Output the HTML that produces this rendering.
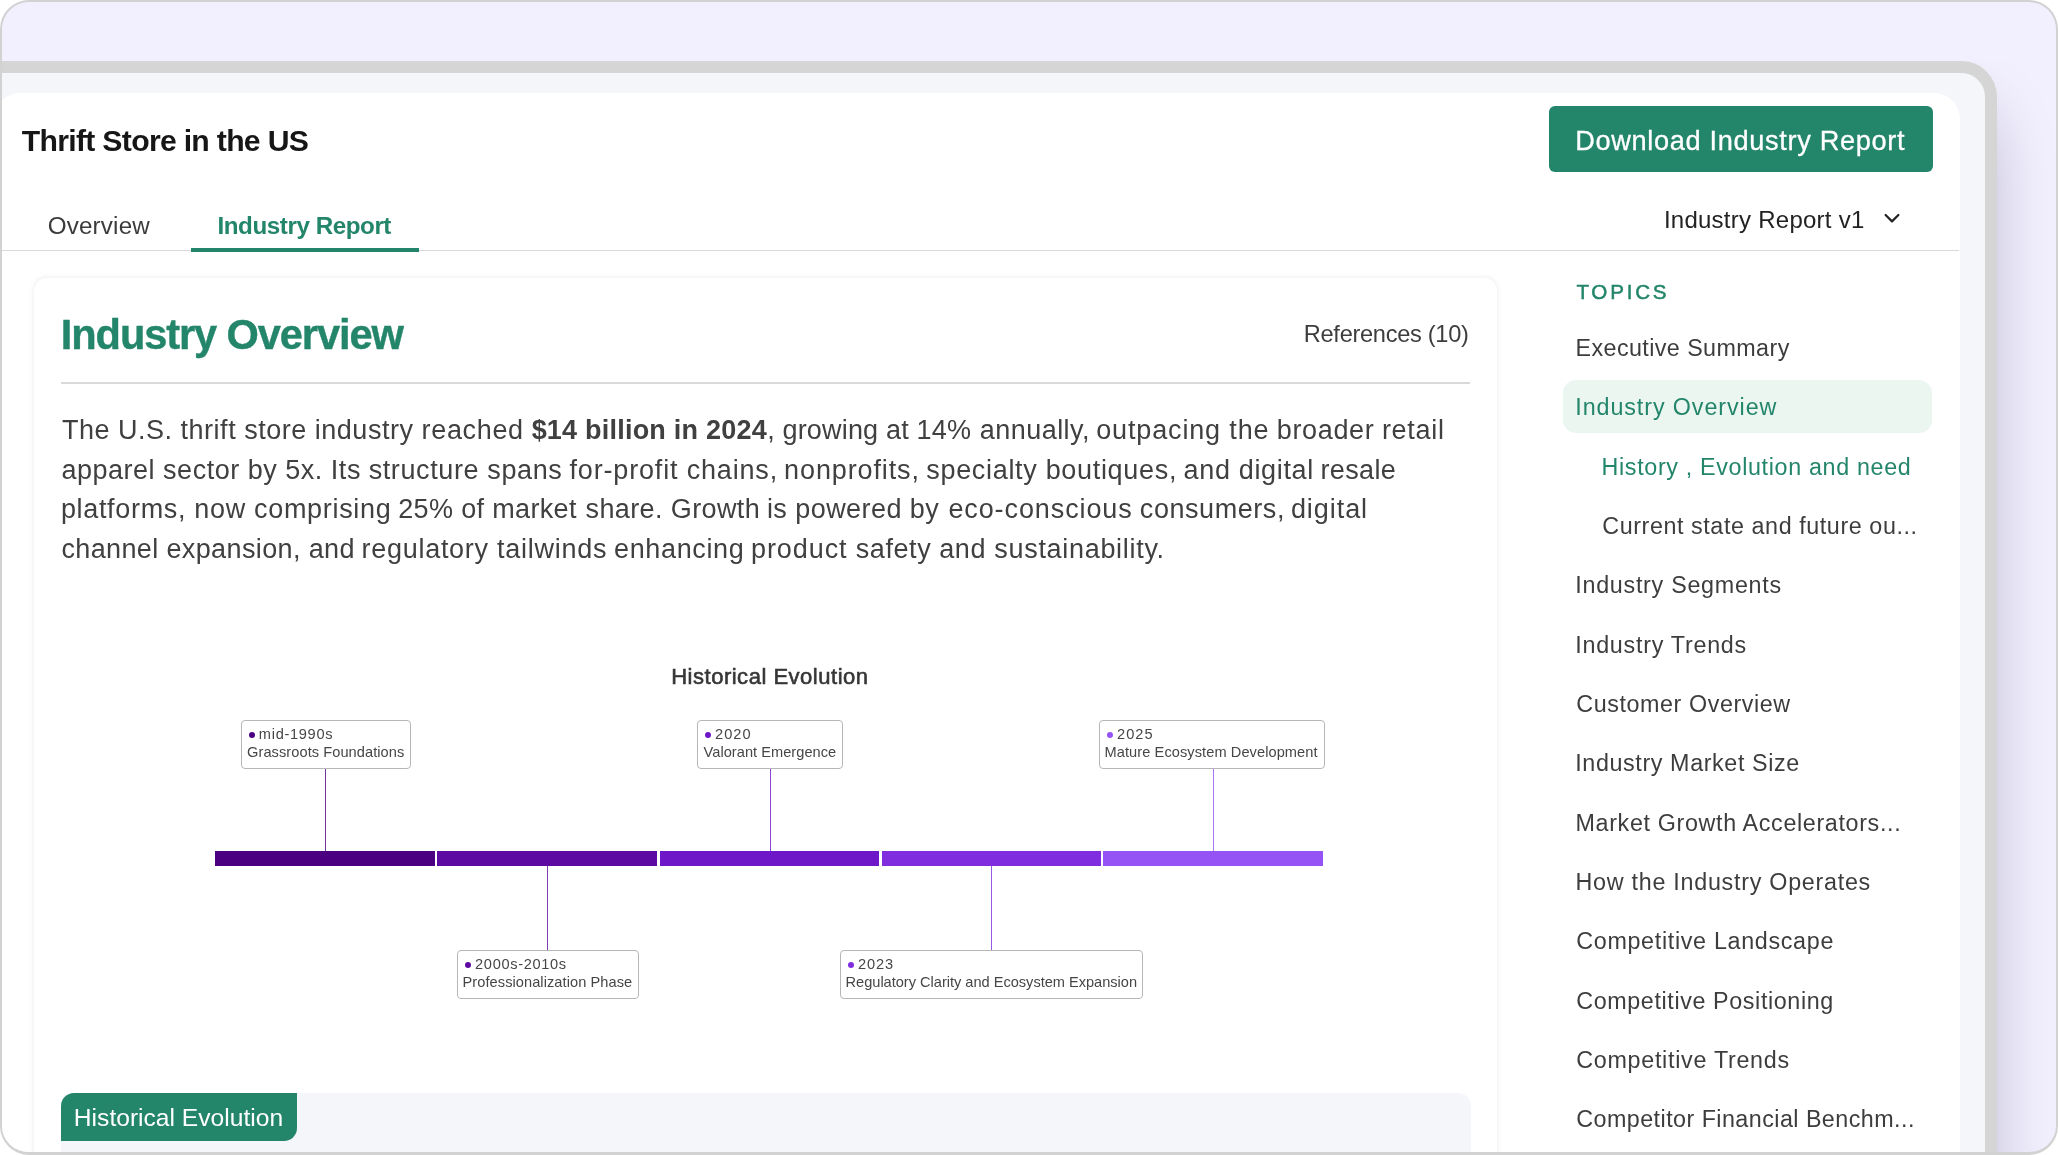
<!DOCTYPE html><html lang="en"><head><meta charset="utf-8"><title>Thrift Store in the US - Industry Report</title><style>

*{box-sizing:border-box;margin:0;padding:0}
html,body{width:2058px;height:1155px;overflow:hidden;background:#fff;font-family:'Liberation Sans', Arial, sans-serif}
.abs{position:absolute}
.t{position:absolute;white-space:nowrap;line-height:1}
.t b{font-weight:700}
#outer{position:absolute;left:0;top:0;width:2058px;height:1155px;border:2px solid #d2d2d2;border-bottom-width:3.2px;border-right-width:2.5px;border-radius:29px;background:#f2f0fe;overflow:hidden}
#inner{will-change:transform;position:absolute;left:-2px;top:-2px;width:2058px;height:1155px}
#dev{position:absolute;left:-60px;top:61px;width:2056.5px;height:1300px;border:12px solid #d5d5d5;border-radius:0 36px 0 0;background:#f5f6fa;box-shadow:0 42px 66px -10px rgba(15,5,60,0.28);clip-path:inset(0 -100px 0 0)}
#card{position:absolute;left:-6px;top:93px;width:1965.5px;height:1200px;background:#fff;border-radius:26px 26px 0 0}
#btn{position:absolute;left:1549px;top:106.2px;width:384.2px;height:66px;background:#23856a;border-radius:6px}
#tabline{position:absolute;left:0;top:250px;width:1959px;height:1.3px;background:#d9d9d9}
#tabul{position:absolute;left:191.2px;top:248px;width:227.6px;height:3.6px;background:#23856a}
#sec{position:absolute;left:34.3px;top:278px;width:1462.5px;height:1000px;background:#fff;border-radius:13px;box-shadow:0 0 5px 0.5px rgba(0,0,0,0.065)}
#hr{position:absolute;left:61.3px;top:382px;width:1409px;height:1.5px;background:#d9d9d9}
#hl{position:absolute;left:1563px;top:380px;width:368.5px;height:52.5px;background:#ebf6f1;border-radius:13px}
#gbox{position:absolute;left:61px;top:1093px;width:1409.5px;height:100px;background:#f5f6fa;border-radius:13px 13px 0 0}
#tagbg{position:absolute;left:61px;top:1093px;width:236px;height:48px;background:#23856a;border-radius:13px 0 13px 0}
.lb{position:absolute;height:49.5px;border:1.6px solid #b6b6b6;border-radius:4px;background:#fff}
.dot{position:absolute;width:6.1px;height:6.1px;border-radius:50%}
.seg{position:absolute;top:851px;height:14.5px}
.stem{position:absolute;width:1.4px;opacity:0.8}

</style></head><body>
<div id="outer"><div id="inner">
<div id="dev"></div><div id="card"></div>
<div id="btn"></div><div id="tabline"></div><div id="tabul"></div>
<div id="sec"></div><div id="hr"></div><div id="hl"></div>
<div id="gbox"></div><div id="tagbg"></div>
<svg class="abs" style="left:1882px;top:210px" width="20" height="18" viewBox="0 0 20 18"><path d="M3.6 5 L10 11.4 L16.4 5" fill="none" stroke="#222" stroke-width="2.2" stroke-linecap="round" stroke-linejoin="round"/></svg>
<div class="seg" style="left:215.3px;width:219.4px;background:#4b0082"></div>
<div class="seg" style="left:437px;width:219.5px;background:#5c0aa2"></div>
<div class="seg" style="left:660px;width:218.5px;background:#6d17c9"></div>
<div class="seg" style="left:881.5px;width:219.0px;background:#802de0"></div>
<div class="seg" style="left:1103.3px;width:219.7px;background:#9553f6"></div>
<div class="stem" style="left:325.10px;top:769px;height:82px;background:#4b0082"></div>
<div class="stem" style="left:769.50px;top:769px;height:82px;background:#6d17c9"></div>
<div class="stem" style="left:1212.70px;top:769px;height:82px;background:#9553f6"></div>
<div class="stem" style="left:546.70px;top:865.5px;height:84.5px;background:#5c0aa2"></div>
<div class="stem" style="left:991.10px;top:865.5px;height:84.5px;background:#802de0"></div>
<div class="lb" style="left:241.20px;top:719.70px;width:169.70px"></div>
<div class="dot" style="left:248.50px;top:732.00px;background:#4b0082"></div>
<div class="lb" style="left:697.20px;top:719.70px;width:145.60px"></div>
<div class="dot" style="left:704.50px;top:732.00px;background:#6d17c9"></div>
<div class="lb" style="left:1099.20px;top:719.70px;width:225.40px"></div>
<div class="dot" style="left:1106.50px;top:732.00px;background:#9553f6"></div>
<div class="lb" style="left:457.20px;top:949.60px;width:181.50px"></div>
<div class="dot" style="left:464.50px;top:961.90px;background:#5c0aa2"></div>
<div class="lb" style="left:840.20px;top:949.60px;width:303.20px"></div>
<div class="dot" style="left:847.50px;top:961.90px;background:#802de0"></div>
<div class="t" style="left:21.80px;top:126.00px;font-size:30.2px;font-weight:700;color:#161616;font-family:'Liberation Sans', Arial, sans-serif;letter-spacing:-0.705px;">Thrift Store in the US</div>
<div class="t" style="left:47.70px;top:214.00px;font-size:24.2px;font-weight:400;color:#3b3b3b;font-family:'Liberation Sans', Arial, sans-serif;letter-spacing:0.179px;">Overview</div>
<div class="t" style="left:217.50px;top:214.00px;font-size:24.2px;font-weight:700;color:#23856a;font-family:'Liberation Sans', Arial, sans-serif;letter-spacing:-0.439px;">Industry Report</div>
<div class="t" style="left:1575.20px;top:127.00px;font-size:27.2px;font-weight:400;color:#ffffff;font-family:'Liberation Sans', Arial, sans-serif;letter-spacing:0.657px;-webkit-text-stroke:0.3px #ffffff;">Download Industry Report</div>
<div class="t" style="left:1663.90px;top:208.00px;font-size:24px;font-weight:400;color:#222222;font-family:'Liberation Sans', Arial, sans-serif;letter-spacing:0.253px;">Industry Report v1</div>
<div class="t" style="left:1576.40px;top:282.00px;font-size:20.6px;font-weight:400;color:#23856a;font-family:'Liberation Sans', Arial, sans-serif;letter-spacing:2.770px;-webkit-text-stroke:0.5px #23856a;">TOPICS</div>
<div class="t" style="left:60.85px;top:314.00px;font-size:41.6px;font-weight:700;color:#23856a;font-family:'Liberation Sans', Arial, sans-serif;letter-spacing:-1.106px;-webkit-text-stroke:0.4px #23856a;">Industry Overview</div>
<div class="t" style="left:1303.80px;top:323.00px;font-size:23.6px;font-weight:400;color:#3d3d3d;font-family:'Liberation Sans', Arial, sans-serif;letter-spacing:-0.293px;">References (10)</div>
<div class="t" style="left:61.90px;top:417.00px;font-size:27px;font-weight:400;color:#404040;font-family:'Liberation Sans', Arial, sans-serif;letter-spacing:0.514px;">The U.S. thrift store industry</div>
<div class="t" style="left:421.60px;top:417.00px;font-size:27px;font-weight:400;color:#404040;font-family:'Liberation Sans', Arial, sans-serif;letter-spacing:0.650px;">reached</div>
<div class="t" style="left:531.65px;top:417.00px;font-size:27px;font-weight:400;color:#404040;font-family:'Liberation Sans', Arial, sans-serif;letter-spacing:0.217px;"><b>$14 billion in 2024</b></div>
<div class="t" style="left:767.15px;top:417.00px;font-size:27px;font-weight:400;color:#404040;font-family:'Liberation Sans', Arial, sans-serif;letter-spacing:0.180px;">, growing at 14%</div>
<div class="t" style="left:979.85px;top:417.00px;font-size:27px;font-weight:400;color:#404040;font-family:'Liberation Sans', Arial, sans-serif;letter-spacing:0.444px;">annually,</div>
<div class="t" style="left:1096.25px;top:417.00px;font-size:27px;font-weight:400;color:#404040;font-family:'Liberation Sans', Arial, sans-serif;letter-spacing:0.846px;">outpacing the</div>
<div class="t" style="left:1276.75px;top:417.00px;font-size:27px;font-weight:400;color:#404040;font-family:'Liberation Sans', Arial, sans-serif;letter-spacing:0.650px;">broader</div>
<div class="t" style="left:1381.90px;top:417.00px;font-size:27px;font-weight:400;color:#404040;font-family:'Liberation Sans', Arial, sans-serif;letter-spacing:0.710px;">retail</div>
<div class="t" style="left:61.40px;top:457.00px;font-size:27px;font-weight:400;color:#404040;font-family:'Liberation Sans', Arial, sans-serif;letter-spacing:0.515px;">apparel sector by 5x. Its</div>
<div class="t" style="left:368.65px;top:457.00px;font-size:27px;font-weight:400;color:#404040;font-family:'Liberation Sans', Arial, sans-serif;letter-spacing:0.614px;">structure spans</div>
<div class="t" style="left:569.50px;top:457.00px;font-size:27px;font-weight:400;color:#404040;font-family:'Liberation Sans', Arial, sans-serif;letter-spacing:0.829px;">for-profit chains,</div>
<div class="t" style="left:784.10px;top:457.00px;font-size:27px;font-weight:400;color:#404040;font-family:'Liberation Sans', Arial, sans-serif;letter-spacing:0.880px;">nonprofits,</div>
<div class="t" style="left:926.25px;top:457.00px;font-size:27px;font-weight:400;color:#404040;font-family:'Liberation Sans', Arial, sans-serif;letter-spacing:0.684px;">specialty boutiques,</div>
<div class="t" style="left:1183.55px;top:457.00px;font-size:27px;font-weight:400;color:#404040;font-family:'Liberation Sans', Arial, sans-serif;letter-spacing:0.665px;">and digital</div>
<div class="t" style="left:1320.45px;top:457.00px;font-size:27px;font-weight:400;color:#404040;font-family:'Liberation Sans', Arial, sans-serif;letter-spacing:0.370px;">resale</div>
<div class="t" style="left:60.90px;top:496.00px;font-size:27px;font-weight:400;color:#404040;font-family:'Liberation Sans', Arial, sans-serif;letter-spacing:0.675px;">platforms, now comprising</div>
<div class="t" style="left:398.25px;top:496.00px;font-size:27px;font-weight:400;color:#404040;font-family:'Liberation Sans', Arial, sans-serif;letter-spacing:0.342px;">25% of market</div>
<div class="t" style="left:585.60px;top:496.00px;font-size:27px;font-weight:400;color:#404040;font-family:'Liberation Sans', Arial, sans-serif;letter-spacing:0.375px;">share. Growth</div>
<div class="t" style="left:766.95px;top:496.00px;font-size:27px;font-weight:400;color:#404040;font-family:'Liberation Sans', Arial, sans-serif;letter-spacing:0.433px;">is powered by</div>
<div class="t" style="left:948.40px;top:496.00px;font-size:27px;font-weight:400;color:#404040;font-family:'Liberation Sans', Arial, sans-serif;letter-spacing:0.900px;">eco-conscious</div>
<div class="t" style="left:1139.85px;top:496.00px;font-size:27px;font-weight:400;color:#404040;font-family:'Liberation Sans', Arial, sans-serif;letter-spacing:0.556px;">consumers,</div>
<div class="t" style="left:1290.90px;top:496.00px;font-size:27px;font-weight:400;color:#404040;font-family:'Liberation Sans', Arial, sans-serif;letter-spacing:0.942px;">digital</div>
<div class="t" style="left:61.40px;top:536.00px;font-size:27px;font-weight:400;color:#404040;font-family:'Liberation Sans', Arial, sans-serif;letter-spacing:0.374px;">channel expansion, and</div>
<div class="t" style="left:361.45px;top:536.00px;font-size:27px;font-weight:400;color:#404040;font-family:'Liberation Sans', Arial, sans-serif;letter-spacing:0.732px;">regulatory tailwinds</div>
<div class="t" style="left:614.05px;top:536.00px;font-size:27px;font-weight:400;color:#404040;font-family:'Liberation Sans', Arial, sans-serif;letter-spacing:0.637px;">enhancing</div>
<div class="t" style="left:750.95px;top:536.00px;font-size:27px;font-weight:400;color:#404040;font-family:'Liberation Sans', Arial, sans-serif;letter-spacing:0.933px;">product</div>
<div class="t" style="left:855.80px;top:536.00px;font-size:27px;font-weight:400;color:#404040;font-family:'Liberation Sans', Arial, sans-serif;letter-spacing:0.561px;">safety and</div>
<div class="t" style="left:994.30px;top:536.00px;font-size:27px;font-weight:400;color:#404040;font-family:'Liberation Sans', Arial, sans-serif;letter-spacing:0.693px;">sustainability.</div>
<div class="t" style="left:1575.50px;top:337.00px;font-size:23.3px;font-weight:400;color:#3d3d3d;font-family:'Liberation Sans', Arial, sans-serif;letter-spacing:0.416px;">Executive Summary</div>
<div class="t" style="left:1575.25px;top:396.00px;font-size:23.3px;font-weight:400;color:#23856a;font-family:'Liberation Sans', Arial, sans-serif;letter-spacing:0.916px;">Industry Overview</div>
<div class="t" style="left:1601.50px;top:456.00px;font-size:23.3px;font-weight:400;color:#23856a;font-family:'Liberation Sans', Arial, sans-serif;letter-spacing:0.663px;">History , Evolution and need</div>
<div class="t" style="left:1602.25px;top:515.00px;font-size:23.3px;font-weight:400;color:#3d3d3d;font-family:'Liberation Sans', Arial, sans-serif;letter-spacing:0.583px;">Current state and future ou...</div>
<div class="t" style="left:1575.25px;top:574.00px;font-size:23.3px;font-weight:400;color:#3d3d3d;font-family:'Liberation Sans', Arial, sans-serif;letter-spacing:0.728px;">Industry Segments</div>
<div class="t" style="left:1575.25px;top:634.00px;font-size:23.3px;font-weight:400;color:#3d3d3d;font-family:'Liberation Sans', Arial, sans-serif;letter-spacing:0.743px;">Industry Trends</div>
<div class="t" style="left:1576.25px;top:693.00px;font-size:23.3px;font-weight:400;color:#3d3d3d;font-family:'Liberation Sans', Arial, sans-serif;letter-spacing:0.587px;">Customer Overview</div>
<div class="t" style="left:1575.25px;top:752.00px;font-size:23.3px;font-weight:400;color:#3d3d3d;font-family:'Liberation Sans', Arial, sans-serif;letter-spacing:0.613px;">Industry Market Size</div>
<div class="t" style="left:1575.50px;top:812.00px;font-size:23.3px;font-weight:400;color:#3d3d3d;font-family:'Liberation Sans', Arial, sans-serif;letter-spacing:0.654px;">Market Growth Accelerators...</div>
<div class="t" style="left:1575.50px;top:871.00px;font-size:23.3px;font-weight:400;color:#3d3d3d;font-family:'Liberation Sans', Arial, sans-serif;letter-spacing:0.735px;">How the Industry Operates</div>
<div class="t" style="left:1576.25px;top:930.00px;font-size:23.3px;font-weight:400;color:#3d3d3d;font-family:'Liberation Sans', Arial, sans-serif;letter-spacing:0.682px;">Competitive Landscape</div>
<div class="t" style="left:1576.25px;top:990.00px;font-size:23.3px;font-weight:400;color:#3d3d3d;font-family:'Liberation Sans', Arial, sans-serif;letter-spacing:0.616px;">Competitive Positioning</div>
<div class="t" style="left:1576.25px;top:1049.00px;font-size:23.3px;font-weight:400;color:#3d3d3d;font-family:'Liberation Sans', Arial, sans-serif;letter-spacing:0.715px;">Competitive Trends</div>
<div class="t" style="left:1576.25px;top:1108.00px;font-size:23.3px;font-weight:400;color:#3d3d3d;font-family:'Liberation Sans', Arial, sans-serif;letter-spacing:0.453px;">Competitor Financial Benchm...</div>
<div class="t" style="left:671.20px;top:666.00px;font-size:22px;font-weight:400;color:#363636;font-family:'Liberation Sans', Arial, sans-serif;letter-spacing:0.513px;-webkit-text-stroke:0.6px #363636;">Historical Evolution</div>
<div class="t" style="left:73.85px;top:1106.00px;font-size:24.6px;font-weight:400;color:#ffffff;font-family:'Liberation Sans', Arial, sans-serif;letter-spacing:0.005px;">Historical Evolution</div>
<div class="t" style="left:258.85px;top:727.00px;font-size:14.6px;font-weight:400;color:#464646;font-family:'Liberation Sans', Arial, sans-serif;letter-spacing:0.694px;">mid-1990s</div>
<div class="t" style="left:247.05px;top:745.00px;font-size:14.6px;font-weight:400;color:#464646;font-family:'Liberation Sans', Arial, sans-serif;letter-spacing:0.071px;">Grassroots Foundations</div>
<div class="t" style="left:715.10px;top:727.00px;font-size:14.6px;font-weight:400;color:#464646;font-family:'Liberation Sans', Arial, sans-serif;letter-spacing:1.000px;">2020</div>
<div class="t" style="left:703.55px;top:745.00px;font-size:14.6px;font-weight:400;color:#464646;font-family:'Liberation Sans', Arial, sans-serif;letter-spacing:0.041px;">Valorant Emergence</div>
<div class="t" style="left:1117.10px;top:727.00px;font-size:14.6px;font-weight:400;color:#464646;font-family:'Liberation Sans', Arial, sans-serif;letter-spacing:1.000px;">2025</div>
<div class="t" style="left:1104.55px;top:745.00px;font-size:14.6px;font-weight:400;color:#464646;font-family:'Liberation Sans', Arial, sans-serif;letter-spacing:0.078px;">Mature Ecosystem Development</div>
<div class="t" style="left:475.10px;top:957.00px;font-size:14.6px;font-weight:400;color:#464646;font-family:'Liberation Sans', Arial, sans-serif;letter-spacing:0.660px;">2000s-2010s</div>
<div class="t" style="left:462.55px;top:975.00px;font-size:14.6px;font-weight:400;color:#464646;font-family:'Liberation Sans', Arial, sans-serif;letter-spacing:0.069px;">Professionalization Phase</div>
<div class="t" style="left:858.10px;top:957.00px;font-size:14.6px;font-weight:400;color:#464646;font-family:'Liberation Sans', Arial, sans-serif;letter-spacing:0.867px;">2023</div>
<div class="t" style="left:845.55px;top:975.00px;font-size:14.6px;font-weight:400;color:#464646;font-family:'Liberation Sans', Arial, sans-serif;letter-spacing:-0.012px;">Regulatory Clarity and Ecosystem Expansion</div>
</div></div></body></html>
